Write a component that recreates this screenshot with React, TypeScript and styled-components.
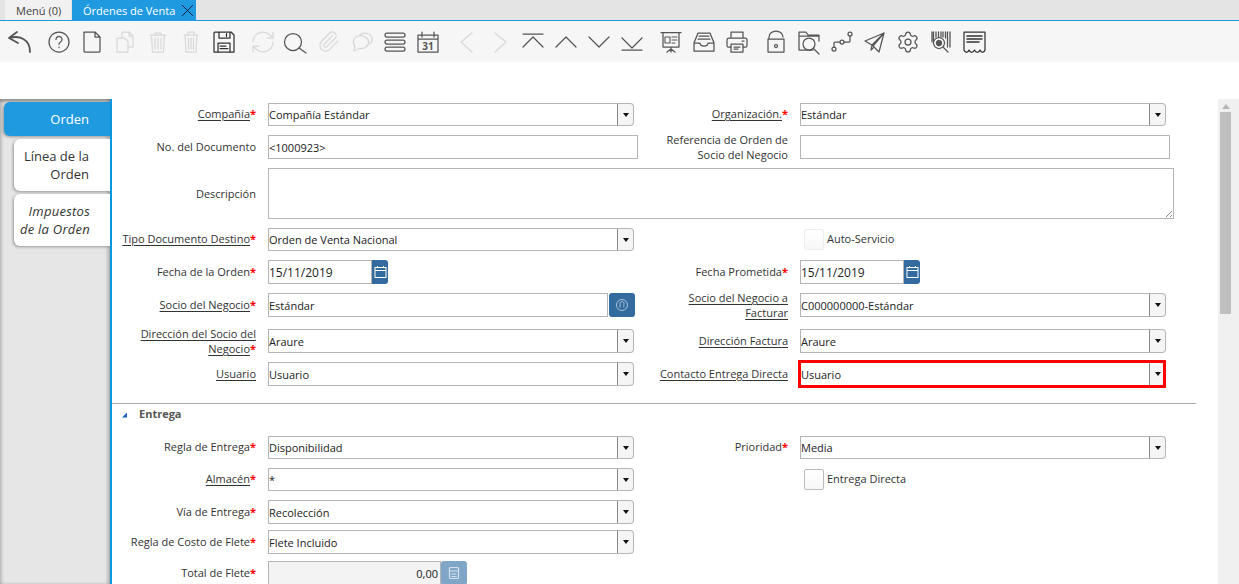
import React from "react";
import styled, { createGlobalStyle } from "styled-components";
import { Paperclip, Settings } from "lucide-react";

const Global = createGlobalStyle`
  html, body {
    margin:0;
    padding:0;
    background:white;
  }
  * {
    box-sizing:border-box;
  }
`

const Page = styled.div`
  width:1239px;
  height:584px;
  overflow:hidden;
  display:flex;
  flex-direction:column;
  font-family:"Open Sans", "Noto Sans", sans-serif;
  font-size:11px;
  color:#333;
`

const TabStrip = styled.div`
  flex:none;
  height:21px;
  display:flex;
  padding-left:5px;
  gap:1px;
  background:#e4e4e4;
  border-bottom:1px solid #1f9ae0;
`

const WindowTab = styled.div<{$active?:boolean}>`
  height:20px;
  display:flex;
  align-items:center;
  font-size:11px;
  padding-left:11px;
  width:${p => p.$active ? "124px" : "66px"};
  color:${p => p.$active ? "white" : "#444"};
  background:${p => p.$active ? "#1f9ae0" : "#f1f1f1"};
  >svg {
    margin-left:6px;
    flex:none;
  }
`

const Toolbar = styled.div`
  flex:none;
  height:41px;
  background:#f6f6f6;
  display:flex;
  align-items:center;
  gap:6px;
  padding-left:3px;
`

const ToolGroup = styled.div`
  display:flex;
`

const Tool = styled.div<{$muted?:boolean}>`
  width:33px;
  height:26px;
  display:flex;
  align-items:center;
  justify-content:center;
  color:${p => p.$muted ? "#d8d8d8" : "#555"};
  >svg {
    display:block;
    fill:none;
    stroke:currentColor;
    stroke-width:1.25;
    stroke-linecap:round;
    stroke-linejoin:round;
  }
`

const Gap = styled.div`
  flex:none;
  height:37px;
`

const Body = styled.div`
  flex:1;
  min-height:0;
  display:flex;
`

const Sidebar = styled.div`
  flex:none;
  width:112px;
  background:#e6e6e6;
  border-right:2px solid #0b9ae2;
  box-shadow:inset 0 3px 3px rgba(0,0,0,0.3), inset -3px 0 3px rgba(0,0,0,0.15), inset 3px 0 3px rgba(0,0,0,0.08);
  display:flex;
  flex-direction:column;
  align-items:flex-end;
  padding-top:3px;
`

const SideTab = styled.div<{$active?:boolean; $italic?:boolean}>`
  width:${p => p.$active ? "106px" : "96px"};
  height:${p => p.$active ? "34px" : "52px"};
  margin-bottom:3px;
  padding-right:${p => p.$italic ? "20px" : "21px"};
  display:flex;
  align-items:center;
  justify-content:flex-end;
  text-align:right;
  font-size:13px;
  line-height:18px;
  font-style:${p => p.$italic ? "italic" : "normal"};
  letter-spacing:${p => p.$italic ? "0.25px" : "0"};
  color:${p => p.$active ? "white" : "#333"};
  background:${p => p.$active ? "#1f9ae0" : "white"};
  border-radius:6px 0 0 6px;
  box-shadow:-1px 1px 3px rgba(0,0,0,0.35);
`

const Panel = styled.div`
  flex:none;
  width:1106px;
  padding-top:4px;
  display:flex;
  flex-direction:column;
`

const Row = styled.div<{$h?:number; $top?:number}>`
  flex:none;
  height:${p => p.$h ?? 24}px;
  margin-top:${p => p.$top ?? 9}px;
  display:grid;
  grid-template-columns:156px 370px 162px 374px;
  grid-template-rows:100%;
  align-items:center;
`

const Label = styled.div<{$wrap?:boolean}>`
  text-align:right;
  padding-right:12px;
  padding-left:9px;
  padding-bottom:${p => p.$wrap ? "0" : "2px"};
  line-height:15px;
  color:#333;
  >u {
    text-underline-offset:2px;
  }
  >b {
    color:#f00;
    font-weight:700;
    font-size:11px;
  }
`

const Box = styled.div<{$w?:number; $readonly?:boolean; $right?:boolean}>`
  height:100%;
  width:${p => p.$w ? p.$w + "px" : "100%"};
  border:1px solid #b5b5b5;
  background:${p => p.$readonly ? "#f3f3f3" : "white"};
  display:flex;
  align-items:center;
  justify-content:${p => p.$right ? "flex-end" : "flex-start"};
  padding-right:${p => p.$right ? "2px" : "0"};
  color:#222;
  white-space:nowrap;
`

const SelectWrap = styled.div<{$marked?:boolean}>`
  position:relative;
  width:366px;
  height:100%;
  display:flex;
  ${p => p.$marked ? `
    &::after {
      content:"";
      position:absolute;
      left:-2px;
      top:-2px;
      right:0;
      bottom:-2px;
      border:3px solid #f00;
    }
  ` : ""}
`

const SelectText = styled.div`
  flex:1;
  border:1px solid #b5b5b5;
  border-right:none;
  display:flex;
  align-items:center;
  color:#222;
`

const SelectButton = styled.div`
  flex:none;
  width:17px;
  border:1px solid #b5b5b5;
  border-left-color:#888;
  border-radius:0 4px 4px 0;
  background:#f5f5f5;
  display:flex;
  align-items:center;
  justify-content:center;
  &::before {
    content:"";
    border-left:3.5px solid transparent;
    border-right:3.5px solid transparent;
    border-top:4px solid #111;
  }
`

const FieldGroup = styled.div<{$gap?:number}>`
  height:100%;
  display:flex;
  gap:${p => p.$gap ?? 0}px;
`

const IconButton = styled.div<{$w:number; $faded?:boolean; $radius?:string}>`
  flex:none;
  width:${p => p.$w}px;
  height:100%;
  background:${p => p.$faded ? "#7fa6c6" : "#336b9e"};
  border-radius:${p => p.$radius ?? "3px"};
  display:flex;
  align-items:center;
  justify-content:center;
  >svg {
    fill:none;
    stroke:currentColor;
  }
`

const Wide = styled.div`
  grid-column:2 / span 3;
  height:100%;
  width:906px;
  position:relative;
  border:1px solid #b5b5b5;
  &::after {
    content:"";
    position:absolute;
    right:1px;
    bottom:1px;
    width:7px;
    height:7px;
    background:repeating-linear-gradient(135deg, transparent 0 2px, #888 2px 3px);
    clip-path:polygon(100% 0, 100% 100%, 0 100%);
  }
`

const CheckRow = styled.div`
  padding-left:4px;
  display:flex;
  align-items:center;
  gap:3px;
  white-space:nowrap;
  >span {
    padding-bottom:2px;
  }
`

const CheckBox = styled.div<{$off?:boolean}>`
  flex:none;
  width:20px;
  height:21px;
  border:1px solid ${p => p.$off ? "#eee" : "#bbb"};
  border-radius:2px;
  background:linear-gradient(#fff, #f7f7f7);
`

const Divider = styled.div`
  flex:none;
  width:1084px;
  height:1px;
  margin-top:17px;
  background:#aaa;
`

const SectionHead = styled.div`
  flex:none;
  height:20px;
  padding:0 0 2px 10px;
  display:flex;
  align-items:center;
  gap:12px;
  font-weight:700;
  color:#555;
  >i {
    width:5px;
    height:5px;
    margin-top:4px;
    background:#1565c0;
    clip-path:polygon(100% 0, 100% 100%, 0 100%);
  }
`

const Scrollbar = styled.div`
  flex:none;
  width:21px;
  background:#f0f0f0;
  padding-left:2px;
  >i {
    display:block;
    width:0;
    margin:5px 0 3px 2px;
    border-left:4px solid transparent;
    border-right:4px solid transparent;
    border-bottom:5px solid #b5b5b5;
  }
  >div {
    width:11px;
    height:202px;
    background:#bfbfbf;
  }
`

const I = ({children, size = 26}:{children:React.ReactNode; size?:number}) => (
  <svg width={size} height={size} viewBox="0 0 26 26">{children}</svg>
)

const Select = ({value, marked}:{value:string; marked?:boolean}) => (
  <SelectWrap $marked={marked}>
    <SelectText>{value}</SelectText>
    <SelectButton />
  </SelectWrap>
)

const Req = ({text, link}:{text:string; link?:boolean}) => (
  <Label>{link ? <u>{text}</u> : text}<b>*</b></Label>
)

const CalendarIcon = () => (
  <svg width="13" height="14" viewBox="0 0 13 14" color="white" strokeWidth="1">
    <rect x="1" y="2.5" width="11" height="10" />
    <path d="M1 5.5H12M3.5 1V3M9.5 1V3" />
  </svg>
)

const DateField = ({value}:{value:string}) => (
  <FieldGroup>
    <Box $w={104} style={{fontSize:12}}>{value}</Box>
    <IconButton $w={16} $radius="0 3px 3px 0"><CalendarIcon /></IconButton>
  </FieldGroup>
)

const DocTabs = () => (
  <TabStrip>
    <WindowTab>Menú (0)</WindowTab>
    <WindowTab $active>
      Órdenes de Venta
      <svg width="13" height="13" viewBox="0 0 13 13" stroke="#124" strokeWidth="1"><path d="M1 1L12 12M12 1L1 12" /></svg>
    </WindowTab>
  </TabStrip>
)

const Tools = () => (
  <Toolbar>
    <ToolGroup>
      <Tool><I><path d="M10 3L2 9L11 14M3 9C12 6 23 10 23 23" strokeWidth="1.8" /></I></Tool>
    </ToolGroup>
    <ToolGroup>
      <Tool><I><circle cx="13" cy="13" r="10" /><path d="M10 10.5a3 3 0 1 1 4.6 2.5c-1 .6-1.6 1.2-1.6 2.3M13 18v.6" /></I></Tool>
      <Tool><I><path d="M5 3H16L21 8V22a1 1 0 0 1-1 1H6a1 1 0 0 1-1-1ZM16 3V8H21" /></I></Tool>
      <Tool $muted><I><path d="M5 9H12L16 12V23H5ZM10 9V3H17L21 7V18H16M17 3V7H21" /></I></Tool>
      <Tool $muted><I><path d="M5 6H21M10 6V4H16V6M6.5 6L7.5 23H18.5L19.5 6M10 9V20M13 9V20M16 9V20" /></I></Tool>
      <Tool $muted><I><path d="M6 6H20M10 6V3H16V6M7 6L8 23H18L19 6M10.5 9V20M13 9V20M15.5 9V20" /></I></Tool>
      <Tool><I>
        <path d="M4 3H20L23 6V23H3V4ZM8 3V9H19V3M15.5 4.5V7.5" stroke="#333" />
        <path d="M7 23V14H19V23M9 17H15M9 19.5H17" stroke="#333" />
      </I></Tool>
    </ToolGroup>
    <ToolGroup>
      <Tool $muted><I><path d="M3 13A10 10 0 0 1 20 6L23 9M23 3V9H17M23 13A10 10 0 0 1 6 20L3 17M3 23V17H9" /></I></Tool>
      <Tool><I><circle cx="10" cy="13" r="8.5" /><path d="M16 19L23 24" /></I></Tool>
      <Tool $muted><Paperclip size={23} strokeWidth={1.2} /></Tool>
      <Tool $muted><I><path d="M9 7a8 6.5 0 1 1 1 12.5L5 22L6 17.5A6.5 6.5 0 0 1 9 7ZM10 7A7 5.5 0 0 1 23 9C24 12 22 14 20 15" /></I></Tool>
      <Tool><I><rect x="3" y="4" width="20" height="4" rx="2" /><rect x="3" y="11" width="20" height="4" rx="2" /><rect x="3" y="18" width="20" height="4" rx="2" /></I></Tool>
      <Tool><I>
        <path d="M3 6H23V23H3ZM3 10H23M7 3V8M19 3V8" />
        <text x="13" y="21" textAnchor="middle" fontSize="10" fontWeight="700" fontFamily="Open Sans" fill="#555" stroke="none">31</text>
      </I></Tool>
    </ToolGroup>
    <ToolGroup>
      <Tool $muted><I><path d="M18 4L7 13L18 23" /></I></Tool>
      <Tool $muted><I><path d="M8 4L19 13L8 23" /></I></Tool>
      <Tool><I><path d="M3 5H23M3 18L13 8L23 18" /></I></Tool>
      <Tool><I><path d="M3 18L13 8L23 18" /></I></Tool>
      <Tool><I><path d="M3 8L13 18L23 8" /></I></Tool>
      <Tool><I><path d="M3 9L13 19L23 9M3 21H23" /></I></Tool>
    </ToolGroup>
    <ToolGroup>
      <Tool><I>
        <path d="M3 3.5H23M5 4V18H21V4M13 18V23M13 20L9 23M13 20L17 23" />
        <path d="M7 8H12V14H7ZM14 8H19M14 11H19M14 14H17" strokeWidth="1.1" />
      </I></Tool>
      <Tool><I>
        <path d="M7 4H19L23 14V22H3V14ZM3 14H9C9 18 17 18 17 14H23M8 7H18M7 10H19" />
      </I></Tool>
      <Tool><I>
        <path d="M7 9V3H19V9M7 18H4C3 18 3 17 3 16V11C3 10 4 9 5 9H21C22 9 23 10 23 11V16C23 17 23 18 22 18H19" />
        <path d="M7 15H19V23H7ZM10 18H16M10 20H14M18 12H20" />
      </I></Tool>
    </ToolGroup>
    <ToolGroup>
      <Tool><I><path d="M6 10V8A7 6 0 0 1 20 8M5 10H21V23H5Z" /><circle cx="13" cy="17" r="1.5" /></I></Tool>
      <Tool><I>
        <path d="M17 21H3V3H10L12 6H23V12M3 7H23" />
        <circle cx="13" cy="15" r="6" />
        <path d="M17.5 19.5L23 25" />
      </I></Tool>
      <Tool><I>
        <circle cx="5" cy="20" r="2" /><circle cx="13" cy="13" r="2" /><circle cx="21" cy="5" r="2" />
        <path d="M5 18V14Q5 13 6 13H11M15 13H20Q21 13 21 12V7" />
      </I></Tool>
      <Tool><I><path d="M22 4L3 12L10 16ZM22 4L17 23L11 17ZM22 4L10 16L9 21L12 18" /></I></Tool>
      <Tool><Settings size={24} strokeWidth={1.1} /></Tool>
      <Tool><I>
        <path d="M4 3V13M5.5 3V12M8 3V8M10.5 3V8M13 3V8M15 3V8M17.5 3V9M19.5 3V18M22 3V18" strokeWidth="1.3" />
        <circle cx="11" cy="14" r="5.5" fill="#f6f6f6" />
        <circle cx="11" cy="14" r="2.5" fill="currentColor" />
        <path d="M15 18L20 23" />
      </I></Tool>
      <Tool><I>
        <path d="M3 3H24V21C23 24 20 24 19 21C18 24 15 24 13.5 21C12 24 9 24 8 21C7 24 4 24 3 21Z" stroke="#333" />
        <path d="M6 7H21M6 10H21M6 13H18" stroke="#333" strokeWidth="1.5" />
      </I></Tool>
    </ToolGroup>
  </Toolbar>
)

const App = () => {
  return (<Page>
    <Global />
    <DocTabs />
    <Tools />
    <Gap />
    <Body>
      <Sidebar>
        <SideTab $active>Orden</SideTab>
        <SideTab>Línea de la Orden</SideTab>
        <SideTab $italic>Impuestos de la Orden</SideTab>
      </Sidebar>
      <Panel>
        <Row $h={23} $top={0}>
          <Req text="Compañía" link />
          <Select value="Compañía Estándar" />
          <Req text="Organización." link />
          <Select value="Estándar" />
        </Row>
        <Row>
          <Label>No. del Documento</Label>
          <Box>&lt;1000923&gt;</Box>
          <Label $wrap>Referencia de Orden de Socio del Negocio</Label>
          <Box $w={370} />
        </Row>
        <Row $h={51}>
          <Label $wrap>Descripción</Label>
          <Wide />
        </Row>
        <Row $h={23}>
          <Req text="Tipo Documento Destino" link />
          <Select value="Orden de Venta Nacional" />
          <span />
          <CheckRow><CheckBox $off /><span>Auto-Servicio</span></CheckRow>
        </Row>
        <Row>
          <Req text="Fecha de la Orden" />
          <DateField value="15/11/2019" />
          <Req text="Fecha Prometida" />
          <DateField value="15/11/2019" />
        </Row>
        <Row>
          <Req text="Socio del Negocio" link />
          <FieldGroup $gap={1}>
            <Box $w={340}>Estándar</Box>
            <IconButton $w={26}>
              <svg width="14" height="14" viewBox="0 0 14 14" color="#a9c4dc" strokeWidth="1">
                <circle cx="7" cy="7" r="5.5" />
                <path d="M5 9.5C5.5 8 5 7 5 5.5C5 3 9 3 9 5.5C9 7 8.5 8 9 9.5" />
              </svg>
            </IconButton>
          </FieldGroup>
          <Label $wrap><u>Socio del Negocio a Facturar</u></Label>
          <Select value="C000000000-Estándar" />
        </Row>
        <Row $top={12}>
          <Label $wrap><u>Dirección del Socio del Negocio</u><b>*</b></Label>
          <Select value="Araure" />
          <Label><u>Dirección Factura</u></Label>
          <Select value="Araure" />
        </Row>
        <Row>
          <Label><u>Usuario</u></Label>
          <Select value="Usuario" />
          <Label><u>Contacto Entrega Directa</u></Label>
          <Select value="Usuario" marked />
        </Row>
        <Divider />
        <SectionHead><i />Entrega</SectionHead>
        <Row $h={23} $top={12}>
          <Req text="Regla de Entrega" />
          <Select value="Disponibilidad" />
          <Req text="Prioridad" />
          <Select value="Media" />
        </Row>
        <Row $h={23}>
          <Req text="Almacén" link />
          <Select value="*" />
          <span />
          <CheckRow><CheckBox /><span>Entrega Directa</span></CheckRow>
        </Row>
        <Row>
          <Req text="Vía de Entrega" />
          <Select value="Recolección" />
        </Row>
        <Row $top={6}>
          <Req text="Regla de Costo de Flete" />
          <Select value="Flete Incluido" />
        </Row>
        <Row $top={7}>
          <Req text="Total de Flete" />
          <FieldGroup>
            <Box $w={173} $readonly $right>0,00</Box>
            <IconButton $w={26} $faded>
              <svg width="12" height="14" viewBox="0 0 12 14" color="#d5e2ee" strokeWidth="1.2">
                <rect x="1.5" y="1.5" width="9" height="11" rx="1" />
                <path d="M1.5 5H10.5M3.5 8H8.5M3.5 10.5H8.5" />
              </svg>
            </IconButton>
          </FieldGroup>
        </Row>
      </Panel>
      <Scrollbar><i /><div /></Scrollbar>
    </Body>
  </Page>)
};

export default App;
